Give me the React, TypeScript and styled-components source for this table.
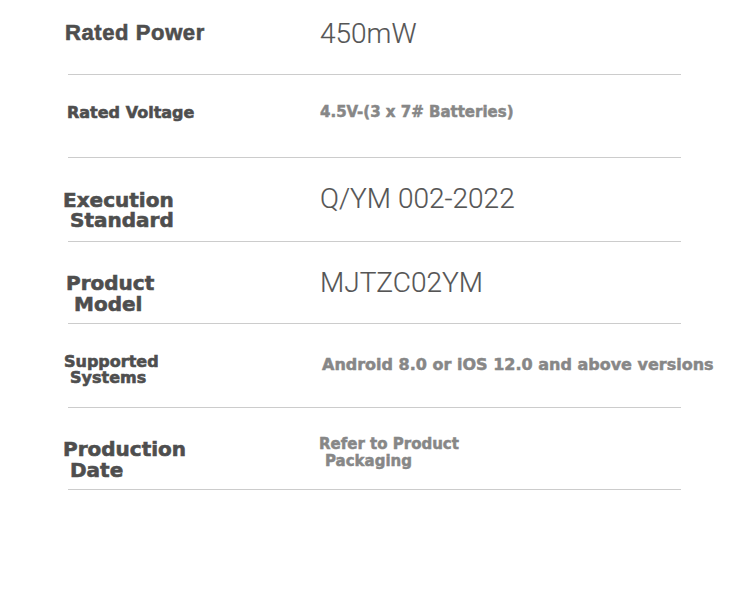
import React from "react";
import styled, { createGlobalStyle } from "styled-components";

const Global = createGlobalStyle`
  html, body { margin: 0; padding: 0; background: #ffffff; }
  body { font-family: "DejaVu Sans", sans-serif; }
`;

type Variant = "heavy" | "light" | "muted";

interface SpecRow {
  height: number;
  labelTop: number;
  labelShift: number;
  labelSize: number;
  labelLine: number;
  labelTrack?: number;
  labelFont?: "dejavu" | "liberation";
  label: string[];
  labelIndent: number;
  valueTop: number;
  valueShift: number;
  valueKind: Variant;
  valueSize: number;
  valueLine: number;
  value: string[];
  valueIndent: number;
}

const rows: SpecRow[] = [
  {
    height: 75, labelTop: 22, labelShift: -3, labelSize: 22, labelLine: 22, labelTrack: 0.6, labelFont: "liberation",
    label: ["Rated Power"], labelIndent: 0,
    valueTop: 20, valueShift: 0, valueKind: "light", valueSize: 28, valueLine: 28,
    value: ["450mW"], valueIndent: 0,
  },
  {
    height: 83, labelTop: 30, labelShift: -1, labelSize: 16, labelLine: 16,
    label: ["Rated Voltage"], labelIndent: 0,
    valueTop: 30, valueShift: 0, valueKind: "muted", valueSize: 15, valueLine: 15,
    value: ["4.5V-(3 x 7# Batteries)"], valueIndent: 0,
  },
  {
    height: 84, labelTop: 32, labelShift: -5, labelSize: 20, labelLine: 20,
    label: ["Execution", "Standard"], labelIndent: 7,
    valueTop: 27, valueShift: 0, valueKind: "light", valueSize: 28, valueLine: 28,
    value: ["Q/YM 002-2022"], valueIndent: 0,
  },
  {
    height: 82, labelTop: 31, labelShift: -2, labelSize: 20, labelLine: 21,
    label: ["Product", "Model"], labelIndent: 8,
    valueTop: 27, valueShift: 0, valueKind: "light", valueSize: 28, valueLine: 28,
    value: ["MJTZC02YM"], valueIndent: 0,
  },
  {
    height: 84, labelTop: 30, labelShift: -4, labelSize: 16, labelLine: 16,
    label: ["Supported", "Systems"], labelIndent: 6,
    valueTop: 33, valueShift: 2, valueKind: "muted", valueSize: 16, valueLine: 16,
    value: ["Android 8.0 or iOS 12.0 and above versions"], valueIndent: 0,
  },
  {
    height: 82, labelTop: 31, labelShift: -5, labelSize: 20, labelLine: 20.5,
    label: ["Production", "Date"], labelIndent: 7,
    valueTop: 28, valueShift: -1, valueKind: "muted", valueSize: 15, valueLine: 17,
    value: ["Refer to Product", "Packaging"], valueIndent: 6,
  },
];

const Table = styled.div`
  margin-left: 68px;
  width: 613px;
  display: flex;
  flex-direction: column;
`;

const Row = styled.div<{ $h: number }>`
  box-sizing: border-box;
  height: ${(p) => p.$h}px;
  border-bottom: 1px solid #cccccc;
  display: grid;
  grid-template-columns: 252px 1fr;
  align-items: start;
`;

const Label = styled.div<{
  $top: number;
  $shift: number;
  $size: number;
  $line: number;
  $track: number;
  $font: string;
}>`
  padding-top: ${(p) => p.$top}px;
  margin-left: ${(p) => p.$shift}px;
  font-family: ${(p) =>
    p.$font === "liberation" ? `"Liberation Sans", Arial, sans-serif` : `"DejaVu Sans", Verdana, sans-serif`};
  font-weight: 700;
  font-size: ${(p) => p.$size}px;
  line-height: ${(p) => p.$line}px;
  letter-spacing: ${(p) => p.$track}px;
  color: #4e4e4e;
  -webkit-text-stroke: 0.6px #4e4e4e;
  white-space: nowrap;
`;

const Value = styled.div<{ $top: number; $shift: number; $size: number; $line: number; $kind: Variant }>`
  padding-top: ${(p) => p.$top}px;
  margin-left: ${(p) => p.$shift}px;
  font-family: ${(p) =>
    p.$kind === "light" ? `Roboto, "Liberation Sans", sans-serif` : `"DejaVu Sans", Verdana, sans-serif`};
  font-weight: ${(p) => (p.$kind === "light" ? 300 : 700)};
  font-size: ${(p) => p.$size}px;
  line-height: ${(p) => p.$line}px;
  color: ${(p) => (p.$kind === "light" ? "#555555" : "#878787")};
  -webkit-text-stroke: ${(p) => (p.$kind === "light" ? "0.15px #555555" : "0.5px #878787")};
  white-space: nowrap;
`;

const Line = styled.span<{ $indent: number }>`
  display: block;
  padding-left: ${(p) => p.$indent}px;
`;

export default function App() {
  return (
    <>
      <Global />
      <Table>
        {rows.map((r) => (
          <Row key={r.label.join(" ")} $h={r.height}>
            <Label
              $top={r.labelTop}
              $shift={r.labelShift}
              $size={r.labelSize}
              $line={r.labelLine}
              $track={r.labelTrack ?? 0}
              $font={r.labelFont ?? "dejavu"}
            >
              {r.label.map((t, i) => (
                <Line key={t} $indent={i === 0 ? 0 : r.labelIndent}>
                  {t}
                </Line>
              ))}
            </Label>
            <Value
              $top={r.valueTop}
              $shift={r.valueShift}
              $size={r.valueSize}
              $line={r.valueLine}
              $kind={r.valueKind}
            >
              {r.value.map((t, i) => (
                <Line key={t} $indent={i === 0 ? 0 : r.valueIndent}>
                  {t}
                </Line>
              ))}
            </Value>
          </Row>
        ))}
      </Table>
    </>
  );
}
